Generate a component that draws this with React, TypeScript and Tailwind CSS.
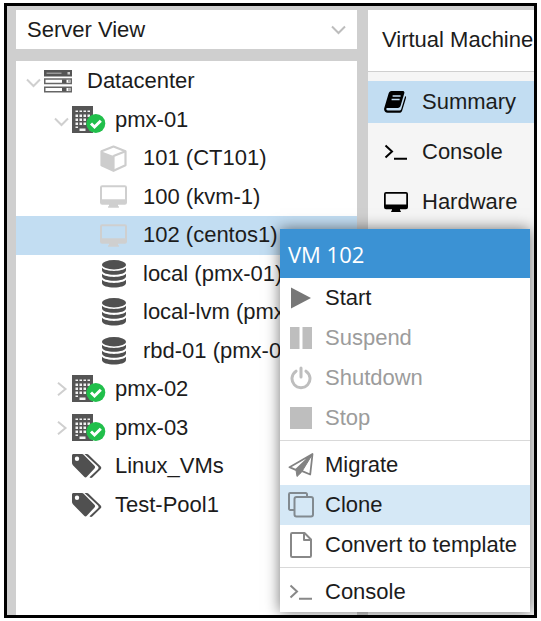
import { useState } from "react";
import type { ReactNode } from "react";

type IconProps = { className?: string };

const ChevronDown = ({ className = "" }: IconProps) => (
  <svg className={className} width="15" height="10" viewBox="0 0 15 10" fill="none" stroke="currentColor" strokeWidth="2">
    <path d="M1 1.500l6.500 6.500L14 1.500" />
  </svg>
);

const ChevronRight = () => (
  <svg width="15" height="14" viewBox="0 0 15 14" fill="none" stroke="currentColor" strokeWidth="2">
    <path d="M4 .8l7.500 6.200L4 13.200" />
  </svg>
);

const ServerIcon = () => (
  <svg width="28" height="23" viewBox="0 0 28 23">
    <path fill="#555" d="M0 0h28v6.500H0z" />
    <path fill="#999" d="M2.500 2.500h15v1.500h-15z" />
    <path fill="#ccc" d="M23.500 2h2.500v2.500h-2.500z" />
    <g fill="#fff" stroke="#666" strokeWidth="1.500">
      <path d="M.75 9h26.500v4.500H.75zM.75 17.300h26.500v4.500H.75z" />
    </g>
    <path fill="#555" d="M18 9.500h4.500v3.500H18zM18 17.800h4.500v3.500H18z" />
    <path fill="#aaa" d="M24 10h2v2.500h-2zM24 18.300h2v2.500h-2z" />
  </svg>
);

const NodeIcon = () => (
  <svg width="34" height="28" viewBox="0 0 34 28">
    <path fill="#555" d="M0 0h21v27H0z" />
    <g fill="#f2f2f2">
      <path d="M3.500 4.500h2.500v1.500H3.500zM7.500 4.500H10v1.500H7.500zM11.500 4.500H14v1.500h-2.500zM15.500 4.500H18v1.500h-2.500z" />
      <path d="M3.500 8.500h2.500v2.500H3.500zM7.500 8.500H10v2.500H7.500zM11.500 8.500H14v2.500h-2.500zM15.500 8.500H18v2.500h-2.500z" />
      <path d="M3.500 12.500h2.500v2.500H3.500zM7.500 12.500H10v2.500H7.500zM11.500 12.500H14v2.500h-2.500z" />
      <path d="M3.500 16.500h2.500v2.500H3.500zM7.500 16.500H10v2.500H7.500zM11.500 16.500H14v2.500h-2.500z" />
      <path d="M3.500 20.500h2.500v1.500H3.500zM7.500 22.500h6v2.500h-6z" />
    </g>
    <circle cx="23.800" cy="17.500" r="9.500" fill="#21bf4b" />
    <path d="M19 17.500l3.500 3.500 6.300-6.300" fill="none" stroke="#fff" strokeWidth="3" />
  </svg>
);

const CubeIcon = () => (
  <svg width="27" height="27" viewBox="0 0 27 27">
    <path fill="#fff" stroke="#cdcdcd" strokeWidth="2.200" strokeLinejoin="round" d="M13.500 1.500l12 4.800v14l-12 5.500-12-5.500v-14z" />
    <path fill="#cdcdcd" d="M1 6.300l12.500 4.800v14.700L1 20.300z" />
    <path fill="none" stroke="#cdcdcd" strokeWidth="2.200" d="M13.500 11.100l12-4.800M13.500 10.500v15" />
  </svg>
);

const DesktopIcon = ({ className = "" }: IconProps) => (
  <svg className={className} viewBox="0 0 30 25" fill="currentColor">
    <path
      fillRule="evenodd"
      d="M2.500 0h25A2.500 2.500 0 0 1 30 2.500v16.700a2.500 2.500 0 0 1-2.500 2.500H20v1.100l1 .9v1.300H9v-1.300l1-.9v-1.100H2.500A2.500 2.500 0 0 1 0 19.200V2.500A2.500 2.500 0 0 1 2.500 0zM2.200 2.200v13.300h25.600V2.200z"
    />
  </svg>
);

const DatabaseIcon = () => (
  <svg width="24" height="28" viewBox="0 0 24 28" fill="#505050">
    <ellipse cx="12" cy="4.700" rx="12" ry="4.700" />
    <path d="M0 7.800c4 4.200 20 4.200 24 0v2.400c0 6-24 6-24 0z" />
    <path d="M0 13.800c4 4.200 20 4.200 24 0v2.400c0 6-24 6-24 0z" />
    <path d="M0 19.800c4 4.200 20 4.200 24 0v3.200c0 6-24 6-24 0z" />
  </svg>
);

const TagsIcon = () => (
  <svg width="30" height="26" viewBox="0 0 30 26" fill="#505050">
    <path
      fillRule="evenodd"
      d="M1.500 1h7.700c1.200 0 2.300.5 3.200 1.400L22.500 12.800c.8.800.8 1.800 0 2.600l-7.700 8.400c-.8.800-1.800.8-2.600 0L1.400 12.800C.5 11.900 0 10.800 0 9.600V2.500C0 1.600.6 1 1.500 1zM5 3.600a2.200 2.200 0 1 0 0 4.400 2.200 2.200 0 0 0 0-4.400z"
    />
    <path d="M12.500 1h1.600c1.200 0 2.300.5 3.200 1.400l11.400 11.200c.8.800.8 1.800 0 2.600l-8.200 8.100c-1 .9-2 .9-3-.1l8.500-8c.8-.8.8-1.800 0-2.600z" />
  </svg>
);

const BookIcon = () => (
  <svg width="22" height="22" viewBox="0 0 22 22">
    <path fill="#000" d="M7.500 0h11.200c1.300 0 2 1 1.600 2.200l-3.700 12.600c-.4 1.400-1.400 2.100-2.700 2.100H3.400c-.9 0-1.400.8-1 1.600.2.600.8.900 1.600.9h11.600c.8 0 1.300-.4 1.600-1.200l4-13.200c.8.500 1 1.300.7 2.300l-3.700 12.200c-.4 1.400-1.500 2.300-2.900 2.300H3.600C1.300 21.800-.4 19.500.2 17.300L4.600 2.600C5.100 1 6 0 7.500 0z" />
    <path stroke="#c2ddf2" strokeWidth="1.500" d="M8.600 5h8M7.600 8.500h8" />
  </svg>
);

const TerminalIcon = ({ className = "" }: IconProps) => (
  <svg className={className} width="24" height="16" viewBox="0 0 24 16" fill="none" stroke="currentColor" strokeWidth="2">
    <path d="M1.500 1.500L8 7.500l-6.500 6M10 14.800h13" />
  </svg>
);

const PlayIcon = () => (
  <svg width="20" height="22" viewBox="0 0 20 22" fill="#777">
    <path d="M0 .5L20 11 0 21.500z" />
  </svg>
);

const PauseIcon = () => (
  <svg width="22" height="22" viewBox="0 0 22 22" fill="#bebebe">
    <path d="M0 0h9.500v22H0zM12.500 0H22v22h-9.500z" />
  </svg>
);

const PowerIcon = () => (
  <svg width="22" height="24" viewBox="0 0 22 24" fill="none" stroke="#bebebe" strokeWidth="3" strokeLinecap="round">
    <path d="M11 2v9M6 5.200a9 9 0 1 0 10 0" />
  </svg>
);

const StopIcon = () => (
  <svg width="22" height="22" viewBox="0 0 22 22" fill="#bebebe">
    <path d="M0 0h22v22H0z" />
  </svg>
);

const PlaneIcon = () => (
  <svg width="26" height="25" viewBox="0 0 26 25" fill="none" stroke="#828282" strokeWidth="1.800" strokeLinejoin="round">
    <path d="M24.500 1L1.500 14.200l6.200 2.600L24.500 1l-2.300 20.500-8-3.300" />
    <path fill="#828282" strokeWidth="1" d="M8 17l1 6.500 4.500-4.300L24 2z" />
  </svg>
);

const CloneIcon = () => (
  <svg width="26" height="26" viewBox="0 0 26 26" fill="none" stroke="#828a90" strokeWidth="2" strokeLinejoin="round">
    <path d="M6.500 18H2.200A1.200 1.200 0 0 1 1 16.800V2.200A1.200 1.200 0 0 1 2.200 1h15.600A1.200 1.200 0 0 1 19 2.200v2.300" />
    <rect x="6.500" y="5" width="18.500" height="19.500" rx="2" />
  </svg>
);

const FileIcon = () => (
  <svg width="22" height="26" viewBox="0 0 22 26" fill="none" stroke="#888" strokeWidth="2" strokeLinejoin="round">
    <path d="M1 2.200C1 1.500 1.500 1 2.200 1H14.500L21 7.500v16.300c0 .7-.5 1.200-1.200 1.200H2.200C1.500 25 1 24.500 1 23.800z" />
    <path d="M14 1v7h7" />
  </svg>
);

type TreeItem = {
  label: string;
  icon: ReactNode;
  depth: 0 | 1 | 2;
  expander?: "open" | "closed";
};

const guestIcon = <DesktopIcon className="h-[25px] w-[30px] text-[#cfcfcf]" />;

const treeItems: TreeItem[] = [
  { label: "Datacenter", icon: <ServerIcon />, depth: 0, expander: "open" },
  { label: "pmx-01", icon: <NodeIcon />, depth: 1, expander: "open" },
  { label: "101 (CT101)", icon: <CubeIcon />, depth: 2 },
  { label: "100 (kvm-1)", icon: guestIcon, depth: 2 },
  { label: "102 (centos1)", icon: guestIcon, depth: 2 },
  { label: "local (pmx-01)", icon: <DatabaseIcon />, depth: 2 },
  { label: "local-lvm (pmx-01)", icon: <DatabaseIcon />, depth: 2 },
  { label: "rbd-01 (pmx-01)", icon: <DatabaseIcon />, depth: 2 },
  { label: "pmx-02", icon: <NodeIcon />, depth: 1, expander: "closed" },
  { label: "pmx-03", icon: <NodeIcon />, depth: 1, expander: "closed" },
  { label: "Linux_VMs", icon: <TagsIcon />, depth: 1 },
  { label: "Test-Pool1", icon: <TagsIcon />, depth: 1 },
];

const indent = { 0: "pl-[10px]", 1: "pl-[38px]", 2: "pl-[66px]" };

function Tree() {
  const [selected, setSelected] = useState("102 (centos1)");
  return (
    <ul role="tree" aria-label="Resources" className="grid h-[462px] grid-rows-12">
      {treeItems.map((item) => (
        <li key={item.label} role="treeitem" aria-selected={item.label === selected} className="min-h-0">
          <button
            type="button"
            onClick={() => setSelected(item.label)}
            className={`flex h-full w-full items-center whitespace-nowrap text-left ${indent[item.depth]} ${
              item.label === selected ? "bg-[#c2ddf2]" : ""
            }`}
          >
            <span className="flex w-[18px] shrink-0 text-[#cfcfcf]">
              {item.expander === "open" && <ChevronDown className="mt-1" />}
              {item.expander === "closed" && <ChevronRight />}
            </span>
            <span className={`flex w-[43px] shrink-0 ${item.depth === 2 ? "justify-center pr-4" : ""}`}>{item.icon}</span>
            <span>{item.label}</span>
          </button>
        </li>
      ))}
    </ul>
  );
}

const tabs = [
  { label: "Summary", icon: <BookIcon />, active: true },
  { label: "Console", icon: <TerminalIcon />, active: false },
  { label: "Hardware", icon: <DesktopIcon className="h-5 w-6" />, active: false },
];

type MenuRowProps = { icon: ReactNode; label: string; disabled?: boolean; active?: boolean };

function MenuRow({ icon, label, disabled = false, active = false }: MenuRowProps) {
  return (
    <button
      type="button"
      role="menuitem"
      disabled={disabled}
      className={`flex h-10 w-full items-center whitespace-nowrap pl-2 text-left disabled:text-[#9c9c9c] ${
        active ? "bg-[#d5e8f6]" : ""
      }`}
    >
      <span className="flex w-[26px] shrink-0 justify-center">{icon}</span>
      <span className="pl-[11px]">{label}</span>
    </button>
  );
}

const Separator = () => <div role="separator" className="mt-0.5 mb-1 h-px bg-[#d9d9d9]" />;

function ContextMenu() {
  return (
    <div
      role="menu"
      aria-label="VM 102"
      className="absolute top-[223px] left-[273px] w-[250px] bg-white shadow-[0_0_14px_rgba(0,0,0,0.55)]"
    >
      <div className="flex h-[49px] items-center bg-[#3b92d4] pl-2 font-['Open_Sans',sans-serif] text-white">VM 102</div>
      <MenuRow icon={<PlayIcon />} label="Start" />
      <MenuRow icon={<PauseIcon />} label="Suspend" disabled />
      <MenuRow icon={<PowerIcon />} label="Shutdown" disabled />
      <MenuRow icon={<StopIcon />} label="Stop" disabled />
      <Separator />
      <MenuRow icon={<PlaneIcon />} label="Migrate" />
      <MenuRow icon={<CloneIcon />} label="Clone" active />
      <MenuRow icon={<FileIcon />} label="Convert to template" />
      <Separator />
      <MenuRow icon={<TerminalIcon className="text-[#888]" />} label="Console" />
    </div>
  );
}

export default function App() {
  return (
    <div className="flex min-h-screen bg-white px-1 py-[3px] font-['Liberation_Sans',Arial,sans-serif] text-[22px] leading-[26px] text-[#1c1c1c]">
      <div className="relative flex min-w-0 flex-1 overflow-hidden border-[3px] border-black bg-[#cfcfcf] pt-1 pl-[9px]">
        <aside className="flex w-[341px] shrink-0 flex-col gap-3">
          <div className="relative h-[39px] bg-white">
            <select aria-label="View" className="h-full w-full appearance-none bg-white pl-[11px] outline-none">
              <option>Server View</option>
            </select>
            <ChevronDown className="pointer-events-none absolute top-[15px] right-[11px] text-[#bdbdbd]" />
          </div>
          <nav className="flex-1 bg-white pt-px">
            <Tree />
          </nav>
        </aside>
        <main className="ml-[11px] flex min-w-0 flex-1 flex-col bg-[#f5f5f5]">
          <h1 className="h-[62px] overflow-hidden border-b border-[#cfcfcf] bg-white pt-[17px] pl-[14px] whitespace-nowrap">
            Virtual Machine
          </h1>
          <div role="tablist" aria-orientation="vertical" className="flex flex-col gap-2 pt-[9px]">
            {tabs.map((tab) => (
              <button
                key={tab.label}
                type="button"
                role="tab"
                aria-selected={tab.active}
                className={`flex h-[42px] items-center pl-4 text-left ${tab.active ? "bg-[#c2ddf2]" : ""}`}
              >
                <span className="flex w-[38px] shrink-0 text-black">{tab.icon}</span>
                <span>{tab.label}</span>
              </button>
            ))}
          </div>
        </main>
        <ContextMenu />
      </div>
    </div>
  );
}
